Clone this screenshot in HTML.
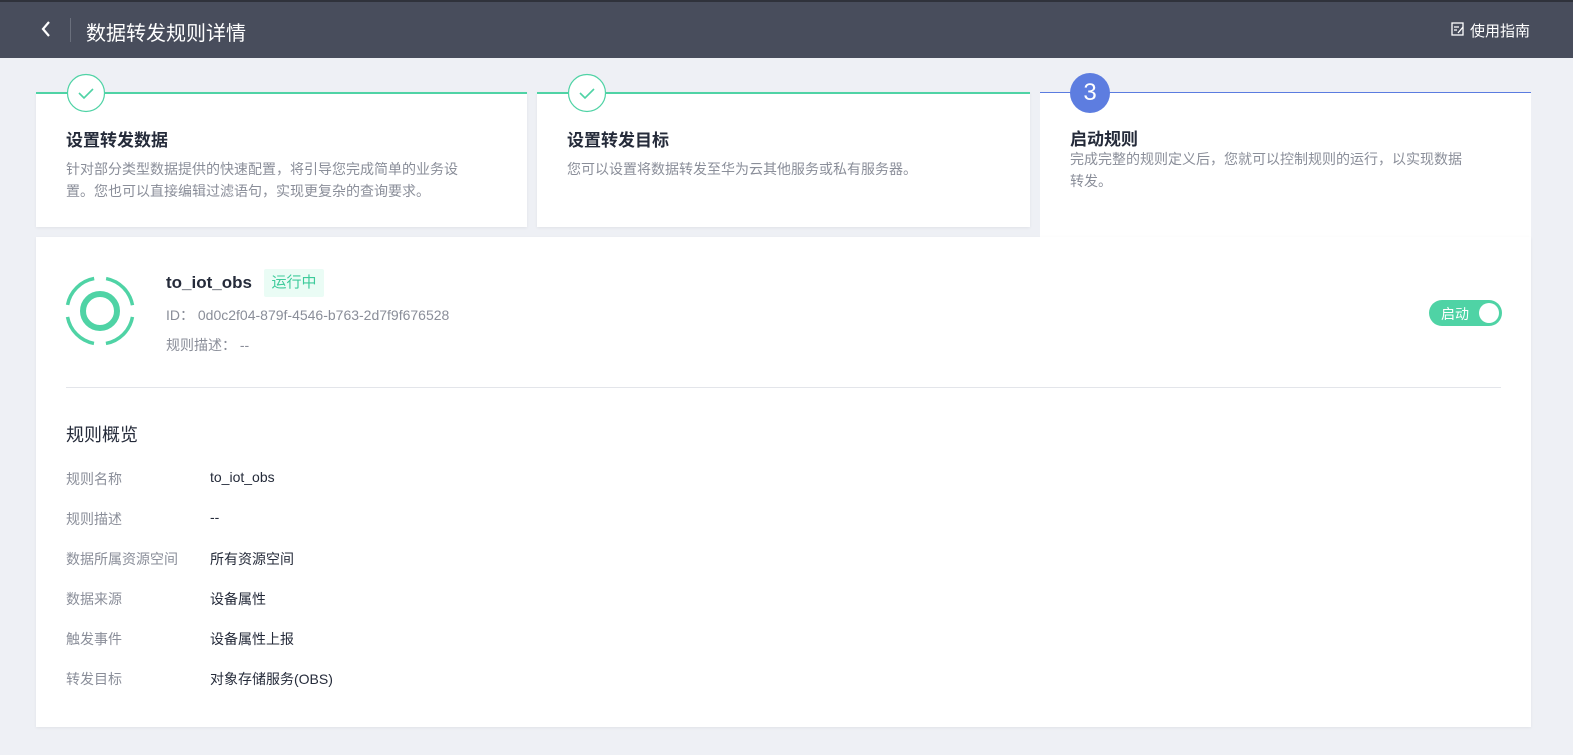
<!DOCTYPE html>
<html><head><meta charset="utf-8"><style>
*{margin:0;padding:0;box-sizing:border-box}
body{width:1573px;height:755px;background:#eef0f5;font-family:"Liberation Sans","Noto Sans CJK SC",sans-serif;position:relative;overflow:hidden;color:#252b3a}
.hd{position:absolute;left:0;top:0;width:1573px;height:58px;background:#484d5c;border-top:2px solid #2f323b}
.abs{position:absolute}
.card{position:absolute;background:#fff;box-shadow:0 1px 3px rgba(0,0,0,.06)}
.t{font-size:17px;font-weight:bold;color:#252b3a;position:absolute;left:30px}
.d{font-size:14px;color:#8a8e99;position:absolute;left:30px;line-height:22px}
.lbl{position:absolute;left:66px;font-size:14px;color:#8a8e99}
.val{position:absolute;left:210px;font-size:14px;color:#252b3a}
</style></head><body>
<div class="hd">
<svg class="abs" style="left:40px;top:17px" width="12" height="20"><path d="M9 3 L3 10 L9 17" stroke="#fff" stroke-width="2.2" fill="none"/></svg>
<div class="abs" style="left:70px;top:16px;width:1px;height:24px;background:#6a6f7c"></div>
<div class="abs" style="left:86px;top:15px;font-size:20px;color:#fff">数据转发规则详情</div>
<svg class="abs" style="left:1451px;top:20px" width="14" height="14"><rect x="1" y="1" width="11" height="12" fill="none" stroke="#fff" stroke-width="1.3"/><path d="M3 5h5M3 8h3M7 11l5-6" stroke="#fff" stroke-width="1.3"/></svg>
<div class="abs" style="left:1470px;top:18px;font-size:15px;color:#fff">使用指南</div>
</div>

<div class="card" style="left:36px;top:92px;width:491px;height:135px;border-top:2px solid #4fd3a5">
<div class="t" style="top:32px">设置转发数据</div>
<div class="d" style="top:64px;width:396px">针对部分类型数据提供的快速配置，将引导您完成简单的业务设置。您也可以直接编辑过滤语句，实现更复杂的查询要求。</div>
</div>
<div class="card" style="left:537px;top:92px;width:493px;height:135px;border-top:2px solid #4fd3a5">
<div class="t" style="top:32px">设置转发目标</div>
<div class="d" style="top:64px">您可以设置将数据转发至华为云其他服务或私有服务器。</div>
</div>
<div class="card" style="left:1040px;top:92px;width:491px;height:150px;border-top:1px solid #5b7ce0;box-shadow:none">
<div class="t" style="top:32px">启动规则</div>
<div class="d" style="top:55px;width:398px">完成完整的规则定义后，您就可以控制规则的运行，以实现数据转发。</div>
</div>
<svg class="abs" style="left:66px;top:73px" width="40" height="40"><circle cx="20" cy="20" r="18.5" fill="#fff" stroke="#4fd3a5" stroke-width="1.2"/><path d="M13 20l5 5 9-9" stroke="#4fd3a5" stroke-width="1.6" fill="none"/></svg>
<svg class="abs" style="left:567px;top:73px" width="40" height="40"><circle cx="20" cy="20" r="18.5" fill="#fff" stroke="#4fd3a5" stroke-width="1.2"/><path d="M13 20l5 5 9-9" stroke="#4fd3a5" stroke-width="1.6" fill="none"/></svg>
<div class="abs" style="left:1070px;top:73px;width:40px;height:40px;border-radius:50%;background:#5d7de0;color:#fff;font-size:24px;text-align:center;line-height:40px">3</div>

<div class="card" style="left:36px;top:237px;width:1495px;height:490px">
<svg class="abs" style="left:28px;top:38px" width="72" height="72">
<circle cx="36" cy="36" r="17" fill="none" stroke="#4fd3a5" stroke-width="6"/>
<circle cx="36" cy="36" r="33" fill="none" stroke="#4fd3a5" stroke-width="3.5" stroke-dasharray="39.8 12" stroke-dashoffset="45.8"/>
</svg>
<div class="abs" style="left:130px;top:36px;font-size:17px;font-weight:bold;color:#252b3a">to_iot_obs</div>
<div class="abs" style="left:228px;top:32px;width:60px;height:28px;background:#eafcf5;border-radius:2px;color:#3dcb9b;font-size:15px;text-align:center;line-height:28px">运行中</div>
<div class="abs" style="left:130px;top:68px;font-size:14px;color:#8a8e99">ID：&nbsp;0d0c2f04-879f-4546-b763-2d7f9f676528</div>
<div class="abs" style="left:130px;top:98px;font-size:14px;color:#8a8e99">规则描述：&nbsp;--</div>
<div class="abs" style="left:1393px;top:63px;width:73px;height:26px;border-radius:13px;background:#4fd3a5">
<span class="abs" style="left:12px;top:4px;color:#fff;font-size:14px">启动</span>
<span class="abs" style="left:50px;top:3px;width:20px;height:20px;border-radius:50%;background:#fff"></span></div>
<div class="abs" style="left:30px;top:150px;width:1435px;height:1px;background:#e3e5ea"></div>
<div class="abs" style="left:30px;top:184px;font-size:18px;color:#252b3a">规则概览</div>
</div>
<div class="lbl" style="top:469px">规则名称</div><div class="val" style="top:469px">to_iot_obs</div>
<div class="lbl" style="top:509px">规则描述</div><div class="val" style="top:509px">--</div>
<div class="lbl" style="top:549px">数据所属资源空间</div><div class="val" style="top:549px">所有资源空间</div>
<div class="lbl" style="top:589px">数据来源</div><div class="val" style="top:589px">设备属性</div>
<div class="lbl" style="top:629px">触发事件</div><div class="val" style="top:629px">设备属性上报</div>
<div class="lbl" style="top:669px">转发目标</div><div class="val" style="top:669px">对象存储服务(OBS)</div>
</body></html>
